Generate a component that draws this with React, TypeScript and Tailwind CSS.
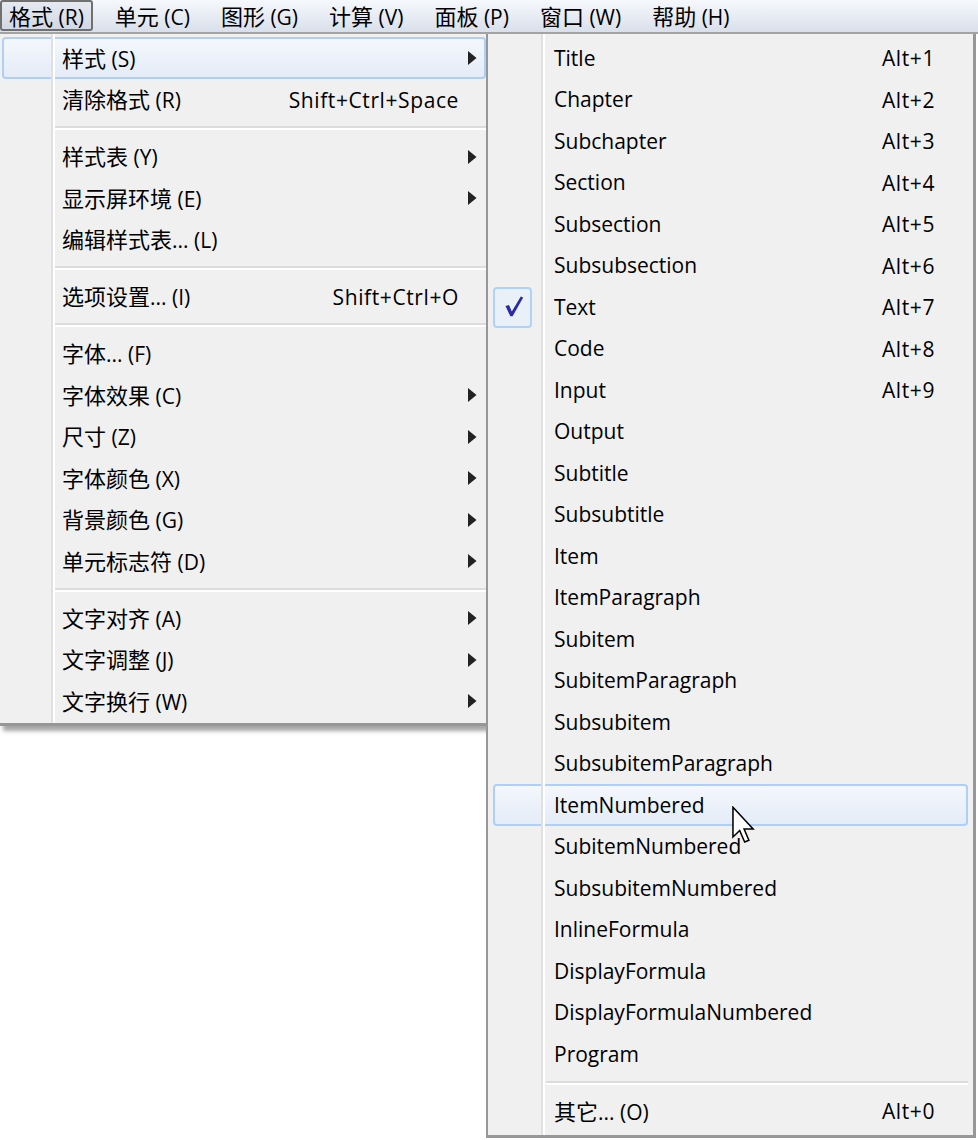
import React from "react";

type Row =
  | { kind: "item"; cjk?: string; rest: string; shortcut?: string; sub?: boolean; hot?: boolean; checked?: boolean }
  | { kind: "sep" };

const FONT = { fontFamily: "'Open Sans', 'Noto Sans CJK SC', sans-serif" };

const menuBar = [
  { cjk: "格式", rest: " (R)", active: true },
  { cjk: "单元", rest: " (C)" },
  { cjk: "图形", rest: " (G)" },
  { cjk: "计算", rest: " (V)" },
  { cjk: "面板", rest: " (P)" },
  { cjk: "窗口", rest: " (W)" },
  { cjk: "帮助", rest: " (H)" },
];

const formatMenu: Row[] = [
  { kind: "item", cjk: "样式", rest: " (S)", sub: true, hot: true },
  { kind: "item", cjk: "清除格式", rest: " (R)", shortcut: "Shift+Ctrl+Space" },
  { kind: "sep" },
  { kind: "item", cjk: "样式表", rest: " (Y)", sub: true },
  { kind: "item", cjk: "显示屏环境", rest: " (E)", sub: true },
  { kind: "item", cjk: "编辑样式表", rest: "... (L)" },
  { kind: "sep" },
  { kind: "item", cjk: "选项设置", rest: "... (I)", shortcut: "Shift+Ctrl+O" },
  { kind: "sep" },
  { kind: "item", cjk: "字体", rest: "... (F)" },
  { kind: "item", cjk: "字体效果", rest: " (C)", sub: true },
  { kind: "item", cjk: "尺寸", rest: " (Z)", sub: true },
  { kind: "item", cjk: "字体颜色", rest: " (X)", sub: true },
  { kind: "item", cjk: "背景颜色", rest: " (G)", sub: true },
  { kind: "item", cjk: "单元标志符", rest: " (D)", sub: true },
  { kind: "sep" },
  { kind: "item", cjk: "文字对齐", rest: " (A)", sub: true },
  { kind: "item", cjk: "文字调整", rest: " (J)", sub: true },
  { kind: "item", cjk: "文字换行", rest: " (W)", sub: true },
];

const styleNames = [
  "Title", "Chapter", "Subchapter", "Section", "Subsection", "Subsubsection", "Text", "Code", "Input",
  "Output", "Subtitle", "Subsubtitle", "Item", "ItemParagraph", "Subitem", "SubitemParagraph",
  "Subsubitem", "SubsubitemParagraph", "ItemNumbered", "SubitemNumbered", "SubsubitemNumbered",
  "InlineFormula", "DisplayFormula", "DisplayFormulaNumbered", "Program",
];

const styleMenu: Row[] = [
  ...styleNames.map((n, i): Row => ({
    kind: "item",
    rest: n,
    shortcut: i < 9 ? `Alt+${i + 1}` : undefined,
    checked: n === "Text",
    hot: n === "ItemNumbered",
  })),
  { kind: "sep" },
  { kind: "item", cjk: "其它", rest: "... (O)", shortcut: "Alt+0" },
];

function Label({ cjk, rest }: { cjk?: string; rest: string }) {
  return (
    <span className="whitespace-pre text-[21px] leading-[26px] text-black">
      {cjk && (
        <span className="text-[22px] leading-[26px]" style={{ fontFamily: "'Noto Sans CJK SC', sans-serif" }}>
          {cjk}
        </span>
      )}
      {rest}
    </span>
  );
}

function Shortcut({ text, className = "" }: { text: string; className?: string }) {
  return <span className={`text-[21px] leading-[26px] tracking-[0.6px] text-black whitespace-pre ${className}`}>{text}</span>;
}

function SubArrow() {
  return (
    <svg width="9" height="14" viewBox="0 0 9 14" className="block">
      <path d="M0 0 L8.5 7 L0 14 Z" fill="#222" />
    </svg>
  );
}

function CheckMark() {
  return (
    <svg width="41" height="41" viewBox="0 0 41 41" className="absolute left-[-2px] top-[-2px]">
      <path d="M12.5 19 L16 18 L18.8 24.5 L27.8 9.5 L30.2 10.6 L19.6 29.3 L17.3 29.3 Z" fill="#2a2aa6" />
    </svg>
  );
}

const hotBox =
  "border-2 border-[#aecff7] rounded-[4px] bg-gradient-to-b from-[#f4f7fc] to-[#e4ecf8]";

function LeftMenu() {
  return (
    <div className="relative z-10 w-[486px] shrink-0 self-start bg-[#f0f0f0] border-b-[3px] border-[#979797] pt-[3.25px] pb-[1.25px] shadow-[3px_5px_4px_rgba(0,0,0,0.35)]">
      {formatMenu.map((r, i) =>
        r.kind === "sep" ? (
          <div key={i} className="h-[15.5px] flex flex-col justify-center pl-[55px]">
            <div className="h-[2px] bg-[#dcdcdc]" />
            <div className="h-[2px] bg-white" />
          </div>
        ) : (
          <div key={i} className={`h-[41.5px] ml-[2px] flex items-center ${r.hot ? hotBox : "border-2 border-transparent"}`}>
            <div className="flex-1 pl-[58px]">
              <Label cjk={r.cjk} rest={r.rest} />
            </div>
            {r.shortcut && <Shortcut text={r.shortcut} />}
            <div className="w-[25px] pl-[9px] flex items-center">{r.sub && <SubArrow />}</div>
          </div>
        )
      )}
      {/* gutter divider */}
      <div className="absolute top-0 bottom-0 left-[51px] w-[4px] flex pointer-events-none">
        <div className="w-[2px] bg-[#e0e0e0]" />
        <div className="w-[2px] bg-white" />
      </div>
    </div>
  );
}

function StyleMenu() {
  return (
    <div className="relative z-20 w-[490px] shrink-0 bg-[#f0f0f0] border-l-2 border-r-[3px] border-b-[3px] border-[#979797] pt-[3.25px] pb-[3px]">
      {styleMenu.map((r, i) =>
        r.kind === "sep" ? (
          <div key={i} className="h-[15.5px] flex flex-col justify-center ml-[58px] mr-[5px]">
            <div className="h-[2px] bg-[#dcdcdc]" />
            <div className="h-[2px] bg-white" />
          </div>
        ) : (
          <div key={i} className={`h-[41.5px] mx-[5px] flex items-center ${r.hot ? hotBox : "border-2 border-transparent"}`}>
            <div className="w-[37px] h-[37.5px] shrink-0 flex items-center">
              {r.checked && (
                <div className="relative w-[41px] h-[41px] ml-[-2px] border-2 border-[#b0d2f8] rounded-[4px] bg-[#eaf0f8]">
                  <CheckMark />
                </div>
              )}
            </div>
            <div className="flex-1 pl-[22px]">
              <Label cjk={r.cjk} rest={r.rest} />
            </div>
            {r.shortcut && <Shortcut text={r.shortcut} className="pr-[31px]" />}
          </div>
        )
      )}
      <div className="absolute top-0 bottom-0 left-[53px] w-[4px] flex pointer-events-none">
        <div className="w-[2px] bg-[#e0e0e0]" />
        <div className="w-[2px] bg-white" />
      </div>
    </div>
  );
}

function Pointer() {
  return (
    <svg width="24" height="38" viewBox="0 0 12.5 19.5" className="absolute left-[732px] top-[806px] z-30">
      <path
        d="M0.5 0.5 L0.5 16 L4 12.6 L6.6 18.6 L8.8 17.7 L6.3 11.8 L11 11.8 Z"
        fill="white"
        stroke="black"
        strokeWidth="0.8"
        strokeLinejoin="miter"
      />
    </svg>
  );
}

export default function App() {
  return (
    <div className="relative w-[978px] h-[1140px] overflow-hidden bg-white" style={FONT}>
      <div className="h-[34px] bg-gradient-to-b from-[#f6f8fc] to-[#d9e0ec] border-b-2 border-[#a3a3a3] flex items-start gap-[13px]">
        {menuBar.map((m, i) => (
          <div
            key={i}
            className={`h-[31px] px-[7px] flex items-center border-2 rounded-[3px] ${
              m.active ? "border-[#707070] bg-gradient-to-b from-[#e6e9f0] to-[#d2d8e4]" : "border-transparent"
            }`}
          >
            <Label cjk={m.cjk} rest={m.rest} />
          </div>
        ))}
      </div>
      <div className="flex">
        <LeftMenu />
        <StyleMenu />
      </div>
      <Pointer />
    </div>
  );
}
